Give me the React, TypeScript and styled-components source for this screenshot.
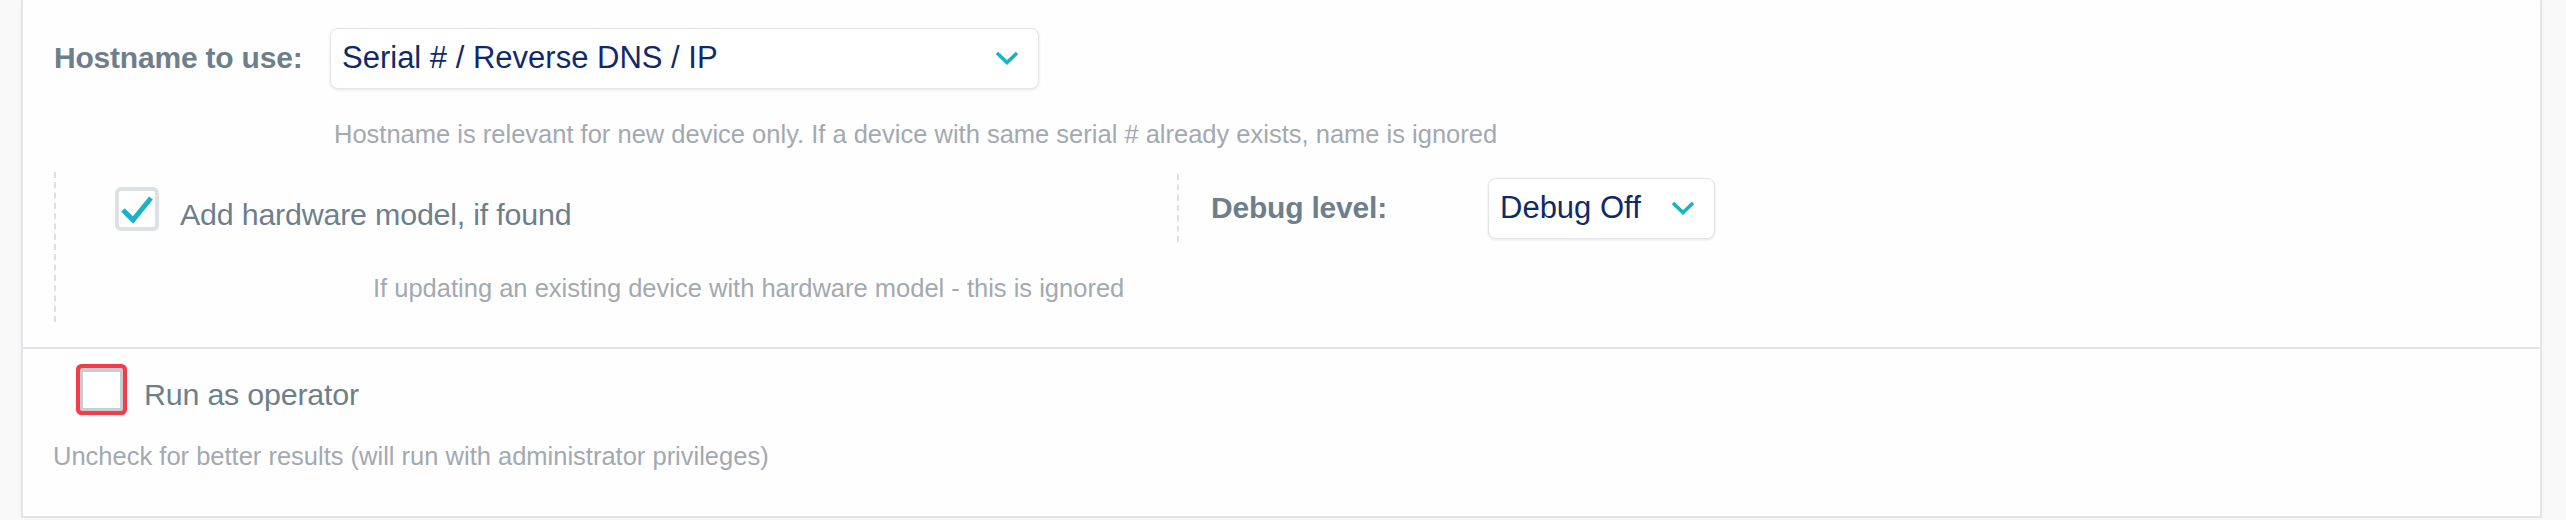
import React from "react";
import styled, { createGlobalStyle } from "styled-components";

const GlobalStyle = createGlobalStyle`
  body {
    margin: 0;
    background: #f9f9f9;
    font-family: "Liberation Sans", Arial, sans-serif;
  }
`;

const Chevron: React.FC = () => (
  <svg width="24" height="14" viewBox="0 0 24 14">
    <polyline
      points="2,2 12,11.5 22,2"
      fill="none"
      stroke="#17b3c7"
      strokeWidth="3.6"
    />
  </svg>
);

const Select: React.FC<{ value: string; width: number }> = ({
  value,
  width
}) => (
  <SelectBox style={{ width }}>
    <SelectValue>{value}</SelectValue>
    <Chevron />
  </SelectBox>
);

const App: React.FC = () => {
  return (
    <Page>
      <GlobalStyle />
      <Panel>
        <Section>
          <FieldRow>
            <FieldLabel>Hostname to use:</FieldLabel>
            <Select value="Serial # / Reverse DNS / IP" width={709} />
          </FieldRow>
          <Hint $indent={280} $top={30}>
            Hostname is relevant for new device only. If a device with same
            serial # already exists, name is ignored
          </Hint>

          <DashedGroup>
            <OptionRow>
              <CheckColumn>
                <CheckBox>
                  <svg width="36" height="36" viewBox="0 0 36 36">
                    <polyline
                      points="4,19 14,29 32,7"
                      fill="none"
                      stroke="#19b2c6"
                      strokeWidth="5"
                    />
                  </svg>
                </CheckBox>
                <CheckLabel $shift={6}>Add hardware model, if found</CheckLabel>
              </CheckColumn>
              <DebugColumn>
                <FieldLabel $width={277}>Debug level:</FieldLabel>
                <Select value="Debug Off" width={227} />
              </DebugColumn>
            </OptionRow>
            <Hint $indent={317} $top={30}>
              If updating an existing device with hardware model - this is
              ignored
            </Hint>
          </DashedGroup>
        </Section>

        <OperatorSection>
          <OperatorRow>
            <EmptyCheckBox $invalid />
            <CheckLabel $shift={5}>Run as operator</CheckLabel>
          </OperatorRow>
          <Hint $indent={0} $top={29}>
            Uncheck for better results (will run with administrator privileges)
          </Hint>
        </OperatorSection>
      </Panel>
    </Page>
  );
};

const Page = styled.div`
  width: 2566px;
  height: 520px;
  overflow: hidden;
  background: #f9f9f9;
`;

const Panel = styled.div`
  box-sizing: border-box;
  margin-left: 21px;
  width: 2521px;
  background: #fefefe;
  border-left: 2px solid #e3e5e8;
  border-right: 2px solid #e3e5e8;
  box-shadow: 0 0 4px rgba(0, 0, 0, 0.04);
`;

const Section = styled.div`
  padding: 28px 0 25px 31px;
  border-bottom: 2px solid #e1e3e6;
`;

const FieldRow = styled.div`
  display: flex;
  align-items: center;
  height: 60px;
`;

const FieldLabel = styled.div<{ $width?: number }>`
  width: ${(p) => p.$width ?? 276}px;
  flex-shrink: 0;
  font-size: 30px;
  font-weight: 700;
  color: #6e7f8c;
  letter-spacing: -0.2px;
`;

const SelectBox = styled.div`
  box-sizing: border-box;
  height: 61px;
  display: flex;
  align-items: center;
  justify-content: space-between;
  padding: 0 19px 0 11px;
  background: #fff;
  border: 1.5px solid #e4e5e7;
  border-radius: 8px;
  box-shadow: 0 1px 3px rgba(0, 0, 0, 0.1);
`;

const SelectValue = styled.span`
  font-size: 31px;
  color: #0f2a6b;
`;

const Hint = styled.div<{ $indent: number; $top: number }>`
  margin-left: ${(p) => p.$indent}px;
  margin-top: ${(p) => p.$top}px;
  font-size: 25.5px;
  line-height: 32px;
  color: #a3a9b0;
`;

const DashedGroup = styled.div`
  margin-top: 22px;
  padding: 2px 0 18px;
  border-left: 2px dashed #dcdfe3;
`;

const OptionRow = styled.div`
  display: flex;
  align-items: center;
  height: 68px;
`;

const CheckColumn = styled.div`
  width: 1121px;
  flex-shrink: 0;
  display: flex;
  align-items: center;
  gap: 21px;
  padding-left: 59px;
  box-sizing: border-box;
`;

const CheckBox = styled.div`
  box-sizing: border-box;
  width: 44px;
  height: 44px;
  margin-top: 2px;
  border: 4px solid #dde0e4;
  border-radius: 6px;
  background: #fff;
  display: flex;
  align-items: center;
  justify-content: center;
`;

const CheckLabel = styled.span<{ $shift: number }>`
  padding-top: ${(p) => p.$shift * 2}px;
  font-size: 30.4px;
  color: #6e7f8c;
  letter-spacing: -0.2px;
`;

const DebugColumn = styled.div`
  display: flex;
  align-items: center;
  height: 68px;
  padding-left: 32px;
  border-left: 2px dashed #dcdfe3;
`;

const OperatorSection = styled.div`
  padding: 19px 0 44px 30px;
  border-bottom: 2px solid #e1e3e6;
`;

const OperatorRow = styled.div`
  display: flex;
  align-items: center;
  gap: 21px;
  margin-left: 27px;
  height: 43px;
`;

const EmptyCheckBox = styled.div<{ $invalid?: boolean }>`
  box-sizing: border-box;
  width: 43px;
  height: 43px;
  border: 3px solid #c9ccd1;
  border-top-width: 4px;
  border-radius: 2px;
  background: #fff;
  box-shadow: ${(p) => (p.$invalid ? "0 0 0 4px #f43b4a" : "none")};
`;

export default App;
